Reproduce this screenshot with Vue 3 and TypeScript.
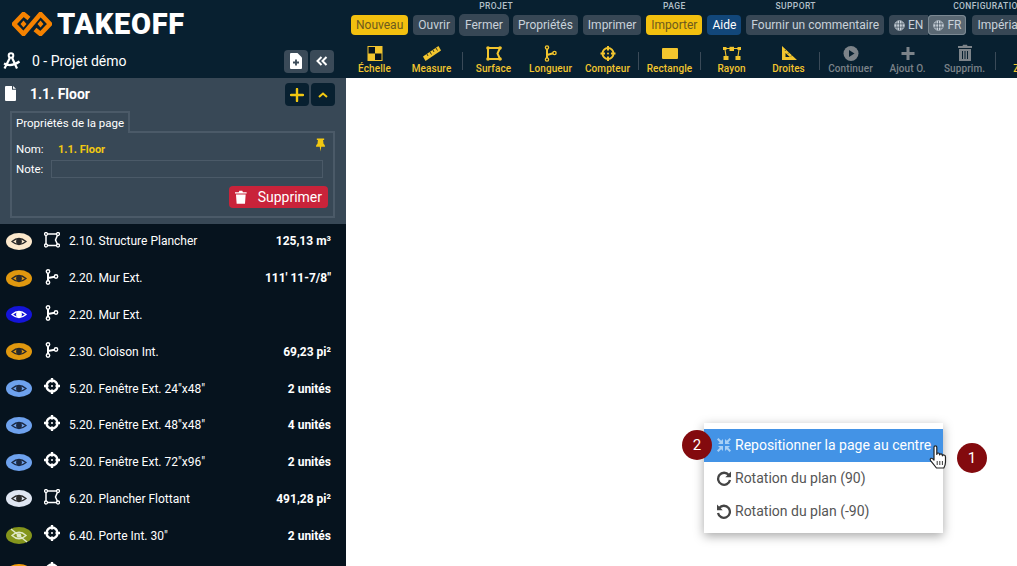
<template>
  <div class="app">
    <aside class="sidebar">
      <div class="brand">
        <svg class="logo" viewBox="0 0 40 24" width="40" height="24">
          <path d="M17 6.500 L11.500 2 L2 12 L11.500 22 L20 12 L28.500 2 L38 12 L28.500 22 L23 17.500" fill="none" stroke="#f58200" stroke-width="4.600" />
          <path d="M14.500 12 L11.500 8.500 L8.500 12 L11.500 15.500 Z M25.500 12 L28.500 8.500 L31.500 12 L28.500 15.500 Z" fill="#f58200" />
        </svg>
        <span class="brand-name">TAKEOFF</span>
      </div>

      <div class="project">
        <svg class="compass" viewBox="0 0 18 18" width="18" height="18">
          <circle cx="8" cy="3.500" r="2.300" fill="none" stroke="#fff" stroke-width="2" />
          <path d="M6.800 6 L1.500 16.500 M9.200 6 L14 16.500 M1 11.500 Q8 15.500 16.500 9.500" fill="none" stroke="#fff" stroke-width="2.200" />
        </svg>
        <span class="project-name">0 - Projet démo</span>
        <button class="square grey">
          <svg viewBox="0 0 12 16" width="12" height="16">
            <path d="M1 0 H7.500 L12 4.500 V15 Q12 16 11 16 H1 Q0 16 0 15 V1 Q0 0 1 0 Z" fill="#fff" />
            <path d="M6 6.500 V12.500 M3 9.500 H9" stroke="#3a4a58" stroke-width="1.800" />
          </svg>
        </button>
        <button class="square grey">
          <svg viewBox="0 0 12 10" width="12" height="10">
            <path d="M5.500 1 L1.500 5 L5.500 9 M10.500 1 L6.500 5 L10.500 9" fill="none" stroke="#fff" stroke-width="2" />
          </svg>
        </button>
      </div>

      <section class="page-panel">
        <div class="page-head">
          <svg viewBox="0 0 11 15" width="11" height="15">
            <path d="M0 1 Q0 0 1 0 H7 V3.800 H11 V14 Q11 15 10 15 H1 Q0 15 0 14 Z M8 0 L11 2.800 H8 Z" fill="#fff" />
          </svg>
          <span class="page-title">1.1. Floor</span>
          <button class="square dark">
            <svg viewBox="0 0 14 14" width="14" height="14">
              <path d="M7 1 V13 M1 7 H13" stroke="#f2c811" stroke-width="2.400" stroke-linecap="round" />
            </svg>
          </button>
          <button class="square dark">
            <svg viewBox="0 0 10 6" width="10" height="6">
              <path d="M1 5 L5 1.500 L9 5" fill="none" stroke="#f2c811" stroke-width="2" />
            </svg>
          </button>
        </div>
        <div class="tab">Propriétés de la page</div>
        <div class="props">
          <svg class="pin" viewBox="0 0 12 14" width="11" height="14">
            <path d="M2 0 H10 V1.500 H8.800 L9.300 5.500 Q11 6.500 11 9 H6.800 L6 14 L5.200 9 H1 Q1 6.500 2.700 5.500 L3.200 1.500 H2 Z" fill="#f2c811" />
          </svg>
          <div class="prop-row">
            <span class="prop-label">Nom:</span>
            <span class="prop-name">1.1. Floor</span>
          </div>
          <div class="prop-row">
            <span class="prop-label note">Note:</span>
            <div class="note-input"></div>
          </div>
          <div class="prop-actions">
            <button class="delete">
              <svg viewBox="0 0 12 14" width="12" height="14">
                <path d="M0 2 H3.800 L4.500 .5 H7.500 L8.200 2 H12 V3.500 H0 Z M1 4.500 H11 L10.300 14 H1.700 Z" fill="#fff" />
              </svg>
              Supprimer
            </button>
          </div>
        </div>
      </section>

      <ul class="items">
        <li v-for="(item, i) in items" :key="i" class="item">
          <svg class="eye" viewBox="0 0 26 17" width="26" height="17">
            <ellipse cx="13" cy="8.500" rx="13" ry="8.500" :fill="item.color" />
            <template v-if="item.hidden">
              <path d="M6 8.500 Q13 2 20 8.500 Q13 15 6 8.500 Z" fill="none" stroke="#dfe8c8" stroke-width="1.500" />
              <circle cx="13" cy="8.500" r="2.300" fill="#dfe8c8" />
              <path d="M5 2 L21 15" stroke="#dfe8c8" stroke-width="1.500" />
            </template>
            <template v-else>
              <path d="M6 8.500 Q13 2.500 20 8.500 Q13 14.500 6 8.500 Z" fill="none" :stroke="item.ink" stroke-width="1.300" />
              <circle cx="13" cy="8.500" r="2.900" :fill="item.ink" />
            </template>
          </svg>
          <svg class="kind" :class="item.kind" viewBox="0 0 16 16" width="16" height="16" fill="none" stroke="#fff">
            <template v-if="item.kind === 'area'">
              <path d="M2 2 H14 L11.500 8 L14 13.500 H2 Z" stroke-width="1.500" />
              <g fill="#06131e" stroke-width="1.300">
                <circle cx="2" cy="2" r="1.500" /><circle cx="14" cy="2" r="1.500" />
                <circle cx="2" cy="13.500" r="1.500" /><circle cx="14" cy="13.500" r="1.500" />
              </g>
            </template>
            <template v-else-if="item.kind === 'line'">
              <path d="M4 2.500 V13.500 M4 9 L12 7.500" stroke-width="2" />
              <g fill="#06131e" stroke-width="1.400">
                <circle cx="4" cy="2.500" r="1.700" /><circle cx="4" cy="13.500" r="1.700" /><circle cx="12" cy="7.500" r="1.700" />
              </g>
            </template>
            <template v-else>
              <circle cx="8" cy="8" r="5.500" stroke-width="2.300" />
              <path d="M8 0 V4.500 M8 11.500 V16 M0 8 H4.500 M11.500 8 H16" stroke-width="2.300" />
              <circle cx="8" cy="8" r="1" fill="#fff" stroke="none" />
            </template>
          </svg>
          <span class="item-name">{{ item.name }}</span>
          <span class="item-value">{{ item.value }}</span>
        </li>
      </ul>
    </aside>

    <main class="main">
      <header class="topbar">
        <nav class="menus">
          <div v-for="group in menus" :key="group.label" class="menu-group">
            <div class="group-label">{{ group.label }}</div>
            <div class="group-buttons">
              <button v-for="b in group.buttons" :key="b.text" class="menu-btn" :class="b.style">
                <svg v-if="b.globe" viewBox="0 0 12 12" width="11" height="11" fill="none" stroke="currentColor" stroke-width="1">
                  <circle cx="6" cy="6" r="5.200" fill="currentColor" />
                  <path d="M1 4.200 H11 M1 7.800 H11 M6 .8 V11.200 M3.500 1.500 Q2.500 6 3.500 10.500 M8.500 1.500 Q9.500 6 8.500 10.500" stroke="#374755" stroke-width=".7" />
                </svg>
                {{ b.text }}
              </button>
            </div>
          </div>
        </nav>
        <div class="tools">
          <template v-for="(tool, i) in tools" :key="i">
            <div v-if="tool.sep" class="tool-sep"><i></i></div>
            <div v-else class="tool" :class="{ off: tool.off }">
              <svg viewBox="0 0 24 20" width="24" height="20" fill="none" stroke="currentColor">
                <template v-if="tool.icon === 'scale'">
                  <rect x="4.500" y="2" width="15" height="15" stroke="none" fill="#f2c52e" />
                  <rect x="5.500" y="3" width="6.500" height="6.500" fill="#06131e" stroke="none" />
                  <rect x="12" y="9.500" width="6.500" height="6.500" fill="#06131e" stroke="none" />
                </template>
                <template v-else-if="tool.icon === 'ruler'">
                  <path d="M3 12.500 L18.500 2 L21 6.500 L5.500 17 Z" fill="#f2c52e" stroke="none" />
                  <path d="M7 10 L8 12 M10 8 L11.500 10.500 M13 6 L14 8 M16 4 L17.500 6.500" stroke="#06131e" stroke-width=".8" />
                </template>
                <template v-else-if="tool.icon === 'area'">
                  <path d="M6 4 H18 L15.500 9.500 L18 15 H6 Z" stroke-width="2" />
                  <g fill="#f2c52e" stroke="none">
                    <circle cx="6" cy="4" r="1.800" /><circle cx="18" cy="4" r="1.800" /><circle cx="6" cy="15" r="1.800" /><circle cx="18" cy="15" r="1.800" />
                  </g>
                </template>
                <template v-else-if="tool.icon === 'line'">
                  <path d="M8 3.500 V15.500 M8 11 L15 9" stroke-width="2" />
                  <g fill="#06131e" stroke-width="1.400">
                    <circle cx="8" cy="3.500" r="1.600" /><circle cx="8" cy="15.500" r="1.600" /><circle cx="15.500" cy="9" r="1.600" />
                  </g>
                </template>
                <template v-else-if="tool.icon === 'count'">
                  <circle cx="12" cy="9.500" r="5.500" stroke-width="2" />
                  <path d="M12 2 V6.500 M12 12.500 V17 M4.500 9.500 H9 M15 9.500 H19.500" stroke-width="2" />
                  <circle cx="12" cy="9.500" r="1" fill="#f2c52e" stroke="none" />
                </template>
                <template v-else-if="tool.icon === 'rect'">
                  <rect x="4" y="4" width="16" height="11" rx="1" fill="#f2c52e" stroke="none" />
                </template>
                <template v-else-if="tool.icon === 'radius'">
                  <g fill="#f2c52e" stroke="none">
                    <rect x="3" y="3" width="3.500" height="3" /><rect x="9.500" y="2.800" width="4.500" height="4.200" /><rect x="17.500" y="3" width="3.500" height="3" />
                    <rect x="3.500" y="12" width="5" height="4" /><rect x="15.500" y="12" width="5" height="4" />
                  </g>
                  <path d="M5 5.500 L6 12 M19 5.500 L18 12 M5 4.500 H19" stroke-width="1.100" />
                </template>
                <template v-else-if="tool.icon === 'square'">
                  <path d="M5 2 L20 16 H5 Z M8.500 9 V13 H12.800 Z" fill="#f2c52e" fill-rule="evenodd" stroke="none" />
                  <path d="M9 5.800 L8 6.800 M12 8.600 L11 9.600 M15 11.400 L14 12.400" stroke="#082030" stroke-width=".8" />
                </template>
                <template v-else-if="tool.icon === 'play'">
                  <circle cx="12" cy="9.500" r="7.500" fill="currentColor" stroke="none" />
                  <path d="M10 6 L15.500 9.500 L10 13 Z" fill="#082030" stroke="none" />
                </template>
                <template v-else-if="tool.icon === 'plus'">
                  <path d="M12 3 V16 M5.500 9.500 H18.500" stroke-width="3" />
                </template>
                <template v-else-if="tool.icon === 'trash'">
                  <path d="M5 2 H9.500 L10 .8 H14 L14.500 2 H19 V4 H5 Z M6 5 H18 V17 H6 Z" fill="currentColor" stroke="none" />
                  <path d="M9.500 7 V15 M12 7 V15 M14.500 7 V15" stroke="#082030" stroke-width="1" />
                </template>
                <template v-else>
                  <circle cx="11" cy="9" r="6" stroke-width="2.500" />
                  <path d="M15 13.500 L20 18" stroke-width="3" />
                </template>
              </svg>
              <span class="tool-label">{{ tool.label }}</span>
            </div>
          </template>
        </div>
      </header>
      <div class="canvas"></div>
    </main>

    <div class="context-menu">
      <div class="ctx-item active">
        <svg viewBox="0 0 16 16" width="16" height="16" fill="#a9d0f5" stroke="none">
          <path d="M1 2.400 L2.400 1 L5.200 3.800 L7 2 V7 H2 L3.800 5.200 Z" />
          <path d="M15 2.400 L13.600 1 L10.800 3.800 L9 2 V7 H14 L12.200 5.200 Z" />
          <path d="M1 13.600 L2.400 15 L5.200 12.200 L7 14 V9 H2 L3.800 10.800 Z" />
          <path d="M15 13.600 L13.600 15 L10.800 12.200 L9 14 V9 H14 L12.200 10.800 Z" />
        </svg>
        Repositionner la page au centre
      </div>
      <div class="ctx-item">
        <svg viewBox="0 0 16 16" width="16" height="16" fill="none" stroke="#444" stroke-width="2.300">
          <path d="M12.800 5 A6 6 0 1 0 14 10" />
          <path d="M15 1.500 V7.200 H9.300 Z" fill="#444" stroke="none" />
        </svg>
        Rotation du plan (90)
      </div>
      <div class="ctx-item">
        <svg viewBox="0 0 16 16" width="16" height="16" fill="none" stroke="#444" stroke-width="2.300">
          <path d="M3.200 5 A6 6 0 1 1 2 10" />
          <path d="M1 1.500 V7.200 H6.700 Z" fill="#444" stroke="none" />
        </svg>
        Rotation du plan (-90)
      </div>
    </div>

    <span class="badge badge-two">2</span>
    <span class="badge badge-one">1</span>

    <svg class="hand" viewBox="0 0 18 24" width="18" height="24">
      <path d="M5 2.200 Q5 .8 6.400 .8 Q7.800 .8 7.800 2.200 V9.500 Q7.800 8 9.200 8 Q10.600 8 10.600 9.800 Q10.800 8.600 12.200 8.800 Q13.400 9 13.400 10.800 Q13.800 9.800 15 10 Q16.500 10.300 16.500 12 V17 Q16.500 20 14.800 23 H7.500 L1.800 15.800 Q.6 14.200 1.800 13.400 Q3.200 12.800 5 15 Z" fill="#fff" stroke="#222" stroke-width="1.200" stroke-linejoin="round" />
      <path d="M8.200 16 V20 M10.800 16 V20 M13.400 16 V20" stroke="#222" stroke-width=".9" />
    </svg>
  </div>
</template>

<script setup lang="ts">
interface Item {
  color: string
  ink: string
  kind: 'area' | 'line' | 'count'
  name: string
  value: string
  hidden?: boolean
}

interface MenuButton {
  text: string
  style?: string
  globe?: boolean
}

interface Tool {
  label?: string
  icon?: string
  off?: boolean
  sep?: boolean
}

const items: Item[] = [
  { color: '#fbe8cc', ink: '#2a2a2a', kind: 'area', name: '2.10. Structure Plancher', value: '125,13 m³' },
  { color: '#e0980f', ink: '#2a2a2a', kind: 'line', name: '2.20. Mur Ext.', value: "111' 11-7/8\"" },
  { color: '#1414d8', ink: '#ffffff', kind: 'line', name: '2.20. Mur Ext.', value: '' },
  { color: '#e0980f', ink: '#2a2a2a', kind: 'line', name: '2.30. Cloison Int.', value: '69,23 pi²' },
  { color: '#6ea2ee', ink: '#1c2a44', kind: 'count', name: '5.20. Fenêtre Ext. 24"x48"', value: '2 unités' },
  { color: '#6ea2ee', ink: '#1c2a44', kind: 'count', name: '5.20. Fenêtre Ext. 48"x48"', value: '4 unités' },
  { color: '#6ea2ee', ink: '#1c2a44', kind: 'count', name: '5.20. Fenêtre Ext. 72"x96"', value: '2 unités' },
  { color: '#dfe6f2', ink: '#2a2a2a', kind: 'area', name: '6.20. Plancher Flottant', value: '491,28 pi²' },
  { color: '#84951c', ink: '#dfe8c8', kind: 'count', name: '6.40. Porte Int. 30"', value: '2 unités', hidden: true },
  { color: '#f59e0b', ink: '#2a2a2a', kind: 'count', name: '', value: '' },
]

const menus: { label: string; buttons: MenuButton[] }[] = [
  {
    label: 'PROJET',
    buttons: [
      { text: 'Nouveau', style: 'gold' },
      { text: 'Ouvrir' },
      { text: 'Fermer', style: 'hover' },
      { text: 'Propriétés' },
      { text: 'Imprimer' },
    ],
  },
  { label: 'PAGE', buttons: [{ text: 'Importer', style: 'gold' }] },
  {
    label: 'SUPPORT',
    buttons: [{ text: 'Aide', style: 'blue' }, { text: 'Fournir un commentaire' }],
  },
  {
    label: 'CONFIGURATION',
    buttons: [
      { text: 'EN', globe: true, style: 'lang' },
      { text: 'FR', globe: true, style: 'lang current' },
      { text: 'Impérial' },
      { text: 'Métrique' },
    ],
  },
]

const tools: Tool[] = [
  { label: 'Échelle', icon: 'scale' },
  { label: 'Measure', icon: 'ruler' },
  { sep: true },
  { label: 'Surface', icon: 'area' },
  { label: 'Longueur', icon: 'line' },
  { label: 'Compteur', icon: 'count' },
  { sep: true },
  { label: 'Rectangle', icon: 'rect' },
  { sep: true },
  { label: 'Rayon', icon: 'radius' },
  { label: 'Droites', icon: 'square' },
  { sep: true },
  { label: 'Continuer', icon: 'play', off: true },
  { label: 'Ajout O.', icon: 'plus', off: true },
  { label: 'Supprim.', icon: 'trash', off: true },
  { sep: true },
  { label: 'Zoom', icon: 'zoom' },
]
</script>

<style scoped>
.app {
  position: relative;
  display: flex;
  width: 1017px;
  height: 566px;
  overflow: hidden;
  font-family: Roboto, "Liberation Sans", sans-serif;
  color: #fff;
}

button {
  font-family: inherit;
  border: none;
  cursor: pointer;
}

/* sidebar */
.sidebar {
  display: flex;
  flex-direction: column;
  flex: 0 0 346px;
  width: 346px;
  background: #06131e;
}

.brand {
  display: flex;
  align-items: center;
  height: 46px;
  padding: 2px 0 0 12px;
  box-sizing: border-box;
  background: #082030;
}

.logo {
  flex: none;
}

.brand-name {
  margin-left: 5px;
  font-size: 29px;
  font-weight: 900;
  letter-spacing: .7px;
  line-height: 1;
}

.project {
  display: flex;
  align-items: center;
  gap: 2px;
  height: 32px;
  padding: 0 12px 2px 3px;
  box-sizing: border-box;
  background: #082030;
}

.compass {
  margin-right: 9px;
}

.project-name {
  flex: 1;
  font-size: 14px;
}

.square {
  display: flex;
  align-items: center;
  justify-content: center;
  width: 24px;
  height: 23px;
  padding: 0;
  border-radius: 4px;
}

.square.grey {
  background: #3a4a58;
}

.square.dark {
  background: #082030;
}

.page-panel {
  height: 146px;
  padding: 5px 11px 0 10px;
  box-sizing: border-box;
  background: #384856;
}

.page-head {
  display: flex;
  align-items: center;
  gap: 2px;
  height: 23px;
}

.page-head > svg {
  margin: -2px 0 0 -5px;
}

.page-title {
  flex: 1;
  margin: -1px 0 0 12px;
  font-size: 14px;
  font-weight: 700;
}

.tab {
  position: relative;
  z-index: 1;
  width: max-content;
  height: 22px;
  margin: 5px 0 -2px;
  padding: 0 4px;
  box-sizing: border-box;
  border: 2px solid #4b5a68;
  border-bottom: none;
  font-size: 11.500px;
  line-height: 20px;
  background: #384856;
}

.props {
  position: relative;
  height: 87px;
  padding: 6px 10px 0 4px;
  box-sizing: border-box;
  border: 2px solid #4b5a68;
}

.pin {
  position: absolute;
  top: 5px;
  right: 7px;
}

.prop-row {
  display: flex;
  align-items: center;
  height: 20px;
  font-size: 11px;
}

.prop-label {
  width: 42px;
  font-size: 11.500px;
}

.prop-label.note {
  width: 35px;
}

.prop-name {
  color: #f2c811;
  font-weight: 700;
}

.note-input {
  flex: 1;
  height: 18px;
  box-sizing: border-box;
  border: 1px solid #4b5a68;
}

.prop-actions {
  display: flex;
  justify-content: flex-end;
  margin: 7px -5px 0 0;
}

.delete {
  display: flex;
  align-items: center;
  gap: 11px;
  width: 99px;
  height: 22px;
  padding: 0 6px;
  box-sizing: border-box;
  border-radius: 4px;
  background: #c9233a;
  color: #fff;
  font-size: 14px;
  white-space: nowrap;
}

.items {
  flex: 1;
  margin: -1px 0 0;
  padding: 0;
  list-style: none;
  overflow: hidden;
}

.item {
  display: flex;
  align-items: center;
  height: 36.800px;
  padding: 0 15px 0 6px;
  box-sizing: border-box;
  font-size: 12px;
}

.eye {
  flex: none;
}

.kind {
  flex: none;
  margin: -3px 0 0 12px;
}

.kind.count {
  margin-top: -5px;
}

.item-name {
  flex: 1;
  margin-left: 9px;
  white-space: nowrap;
}

.item-value {
  font-weight: 700;
  white-space: nowrap;
}

/* top area */
.main {
  display: flex;
  flex-direction: column;
  flex: 1;
  min-width: 0;
}

.topbar {
  flex: none;
  height: 78px;
  background: #082030;
  overflow: hidden;
}

.menus {
  display: flex;
  gap: 5px;
  padding-left: 5px;
  white-space: nowrap;
}

.group-label {
  height: 15px;
  font-size: 8.500px;
  font-weight: 500;
  line-height: 13px;
  letter-spacing: .4px;
  text-align: center;
  color: #b4c0ca;
}

.group-buttons {
  display: flex;
  gap: 5px;
}

.menu-btn {
  display: flex;
  align-items: center;
  gap: 3px;
  height: 20px;
  padding: 0 5px;
  border-radius: 4px;
  background: #374755;
  color: #c9d2da;
  font-size: 12px;
  white-space: nowrap;
}

.menu-btn.gold {
  background: #f2c00f;
  color: #6d5a1e;
}

.menu-btn.blue {
  background: #12477a;
  color: #fff;
}

.menu-btn.hover {
  box-shadow: 0 0 0 1px #374755;
}

.menu-btn.lang {
  margin-right: -5px;
  border-radius: 4px 0 0 4px;
}

.menu-btn.current {
  margin-right: 1px;
  border-radius: 4px;
  background: #5a6873;
  box-shadow: inset 0 0 0 1px #7b8892;
}

.tools {
  display: flex;
  margin-top: 9px;
}

.tool {
  display: flex;
  flex-direction: column;
  align-items: center;
  flex: 0 0 57px;
  color: #f2c52e;
}

.tool.off {
  color: #7c8389;
}

.tool-label {
  margin-top: -1px;
  font-size: 10px;
  font-weight: 500;
  letter-spacing: .1px;
  line-height: 12px;
  white-space: nowrap;
}

.tool-sep {
  display: flex;
  justify-content: center;
  flex: 0 0 5px;
  padding-top: 8px;
}

.tool-sep i {
  display: block;
  width: 1px;
  height: 18px;
  background: #3a4a58;
}

.canvas {
  flex: 1;
  background: #fff;
}

/* overlays */
.context-menu {
  position: absolute;
  left: 704px;
  top: 423px;
  width: 239px;
  height: 110px;
  padding-top: 6px;
  box-sizing: border-box;
  background: #fff;
  box-shadow: 0 3px 10px rgba(0, 0, 0, .35);
}

.ctx-item {
  display: flex;
  align-items: center;
  gap: 3px;
  height: 33px;
  padding: 0 0 2px 12px;
  box-sizing: border-box;
  font-size: 14px;
  color: #555;
  white-space: nowrap;
}

.ctx-item.active {
  background: #4393e6;
  color: #fff;
}

.badge {
  position: absolute;
  display: flex;
  align-items: center;
  justify-content: center;
  width: 30px;
  height: 30px;
  border-radius: 50%;
  background: #830a0e;
  color: #fff;
  font-size: 15px;
}

.badge-two {
  left: 682px;
  top: 430px;
}

.badge-one {
  left: 957px;
  top: 443px;
}

.hand {
  position: absolute;
  left: 929px;
  top: 445px;
}
</style>
